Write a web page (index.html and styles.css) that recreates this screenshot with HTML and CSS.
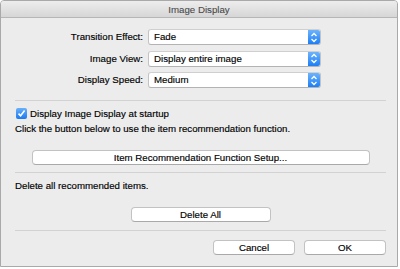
FILE: index.html
```html
<!DOCTYPE html>
<html>
<head>
<meta charset="utf-8">
<link rel="stylesheet" href="styles.css">
</head>
<body>
<div class="window">
  <div class="titlebar">Image Display</div>
  <div class="content">
    <div class="form">
      <label class="lbl">Transition Effect:</label>
      <div class="select"><span class="val">Fade</span><span class="stepper"><svg width="12" height="15" viewBox="0 0 12 15"><path d="M3.5 6 L6 3.5 L8.5 6 M3.5 9 L6 11.5 L8.5 9" fill="none" stroke="#fff" stroke-width="1.3"/></svg></span></div>
      <label class="lbl">Image View:</label>
      <div class="select"><span class="val">Display entire image</span><span class="stepper"><svg width="12" height="15" viewBox="0 0 12 15"><path d="M3.5 6 L6 3.5 L8.5 6 M3.5 9 L6 11.5 L8.5 9" fill="none" stroke="#fff" stroke-width="1.3"/></svg></span></div>
      <label class="lbl">Display Speed:</label>
      <div class="select"><span class="val">Medium</span><span class="stepper"><svg width="12" height="15" viewBox="0 0 12 15"><path d="M3.5 6 L6 3.5 L8.5 6 M3.5 9 L6 11.5 L8.5 9" fill="none" stroke="#fff" stroke-width="1.3"/></svg></span></div>
    </div>
    <div class="sep sep1"></div>
    <div class="check-row">
      <span class="checkbox"><svg width="11" height="11" viewBox="0 0 11 11"><path d="M2.5 5.6 L4.6 7.8 L8.6 2.6" fill="none" stroke="#fff" stroke-width="1.6"/></svg></span>
      <span>Display Image Display at startup</span>
    </div>
    <div class="text t-click">Click the button below to use the item recommendation function.</div>
    <div class="btn-row b-setup"><div class="btn setup">Item Recommendation Function Setup...</div></div>
    <div class="sep sep2"></div>
    <div class="text t-delete">Delete all recommended items.</div>
    <div class="btn-row b-delete"><div class="btn delete">Delete All</div></div>
    <div class="sep sep3"></div>
    <div class="footer">
      <div class="btn small">Cancel</div>
      <div class="btn small">OK</div>
    </div>
  </div>
</div>
</body>
</html>
```
FILE: styles.css
```css
html, body {
  margin: 0;
  padding: 0;
  background: #ffffff;
}
body {
  font-family: "Liberation Sans", Arial, sans-serif;
  font-size: 9.7px;
  color: #000;
  -webkit-text-stroke: 0.15px #000;
}
.window {
  width: 396px;
  height: 265px;
  border: 1px solid #a9a9a9;
  border-radius: 4px 4px 0 0;
  background: #ececec;
  overflow: hidden;
  display: flex;
  flex-direction: column;
}
.titlebar {
  height: 16px;
  line-height: 17px;
  text-align: center;
  color: #4a4a4a;
  -webkit-text-stroke: 0.1px #4a4a4a;
  background: linear-gradient(#ededed, #d6d6d6);
  border-bottom: 1px solid #b6b6b6;
}
.content {
  padding: 0 11px 0 14px;
  display: flex;
  flex-direction: column;
}
.form {
  margin-top: 11px;
  display: grid;
  grid-template-columns: 128px 173px;
  column-gap: 5px;
  row-gap: 5.5px;
}
.lbl {
  text-align: right;
  line-height: 16px;
}
.select {
  height: 14px;
  border: 1px solid #c3c3c3;
  border-top-color: #cfcfcf;
  border-bottom-color: #b3b3b3;
  border-radius: 3px;
  background: #fff;
  display: flex;
  justify-content: space-between;
  overflow: hidden;
}
.val {
  padding-left: 5px;
  line-height: 14px;
}
.stepper {
  width: 12px;
  height: 14px;
  display: flex;
  align-items: center;
  justify-content: center;
  background: linear-gradient(#6db3fb, #1e7ef6);
}
.stepper svg {
  display: block;
}
.sep {
  height: 1px;
  background: #d2d2d2;
}
.sep1 { margin-top: 12px; }
.check-row {
  margin-top: 5px;
  height: 14px;
  display: flex;
  align-items: center;
  gap: 3px;
  padding-left: 1px;
}
.checkbox {
  width: 11px;
  height: 11px;
  border-radius: 2px;
  background: linear-gradient(#68b0fa, #1a7af2);
  display: flex;
}
.checkbox svg { display: block; }
.text {
  line-height: 14px;
}
.t-click { margin-top: 2px; }
.btn-row {
  display: flex;
  justify-content: center;
}
.b-setup { margin-top: 14px; }
.btn {
  height: 13px;
  line-height: 13px;
  text-align: center;
  background: #fff;
  border: 1px solid #c2c2c2;
  border-bottom-color: #a9a9a9;
  border-radius: 4px;
}
.setup { width: 336px; }
.sep2 { margin-top: 7px; }
.t-delete { margin-top: 6px; }
.b-delete { margin-top: 14px; }
.delete { width: 138px; }
.sep3 { margin-top: 8px; }
.footer {
  margin-top: 9px;
  display: flex;
  justify-content: flex-end;
  gap: 9px;
}
.small { width: 80px; }
```
